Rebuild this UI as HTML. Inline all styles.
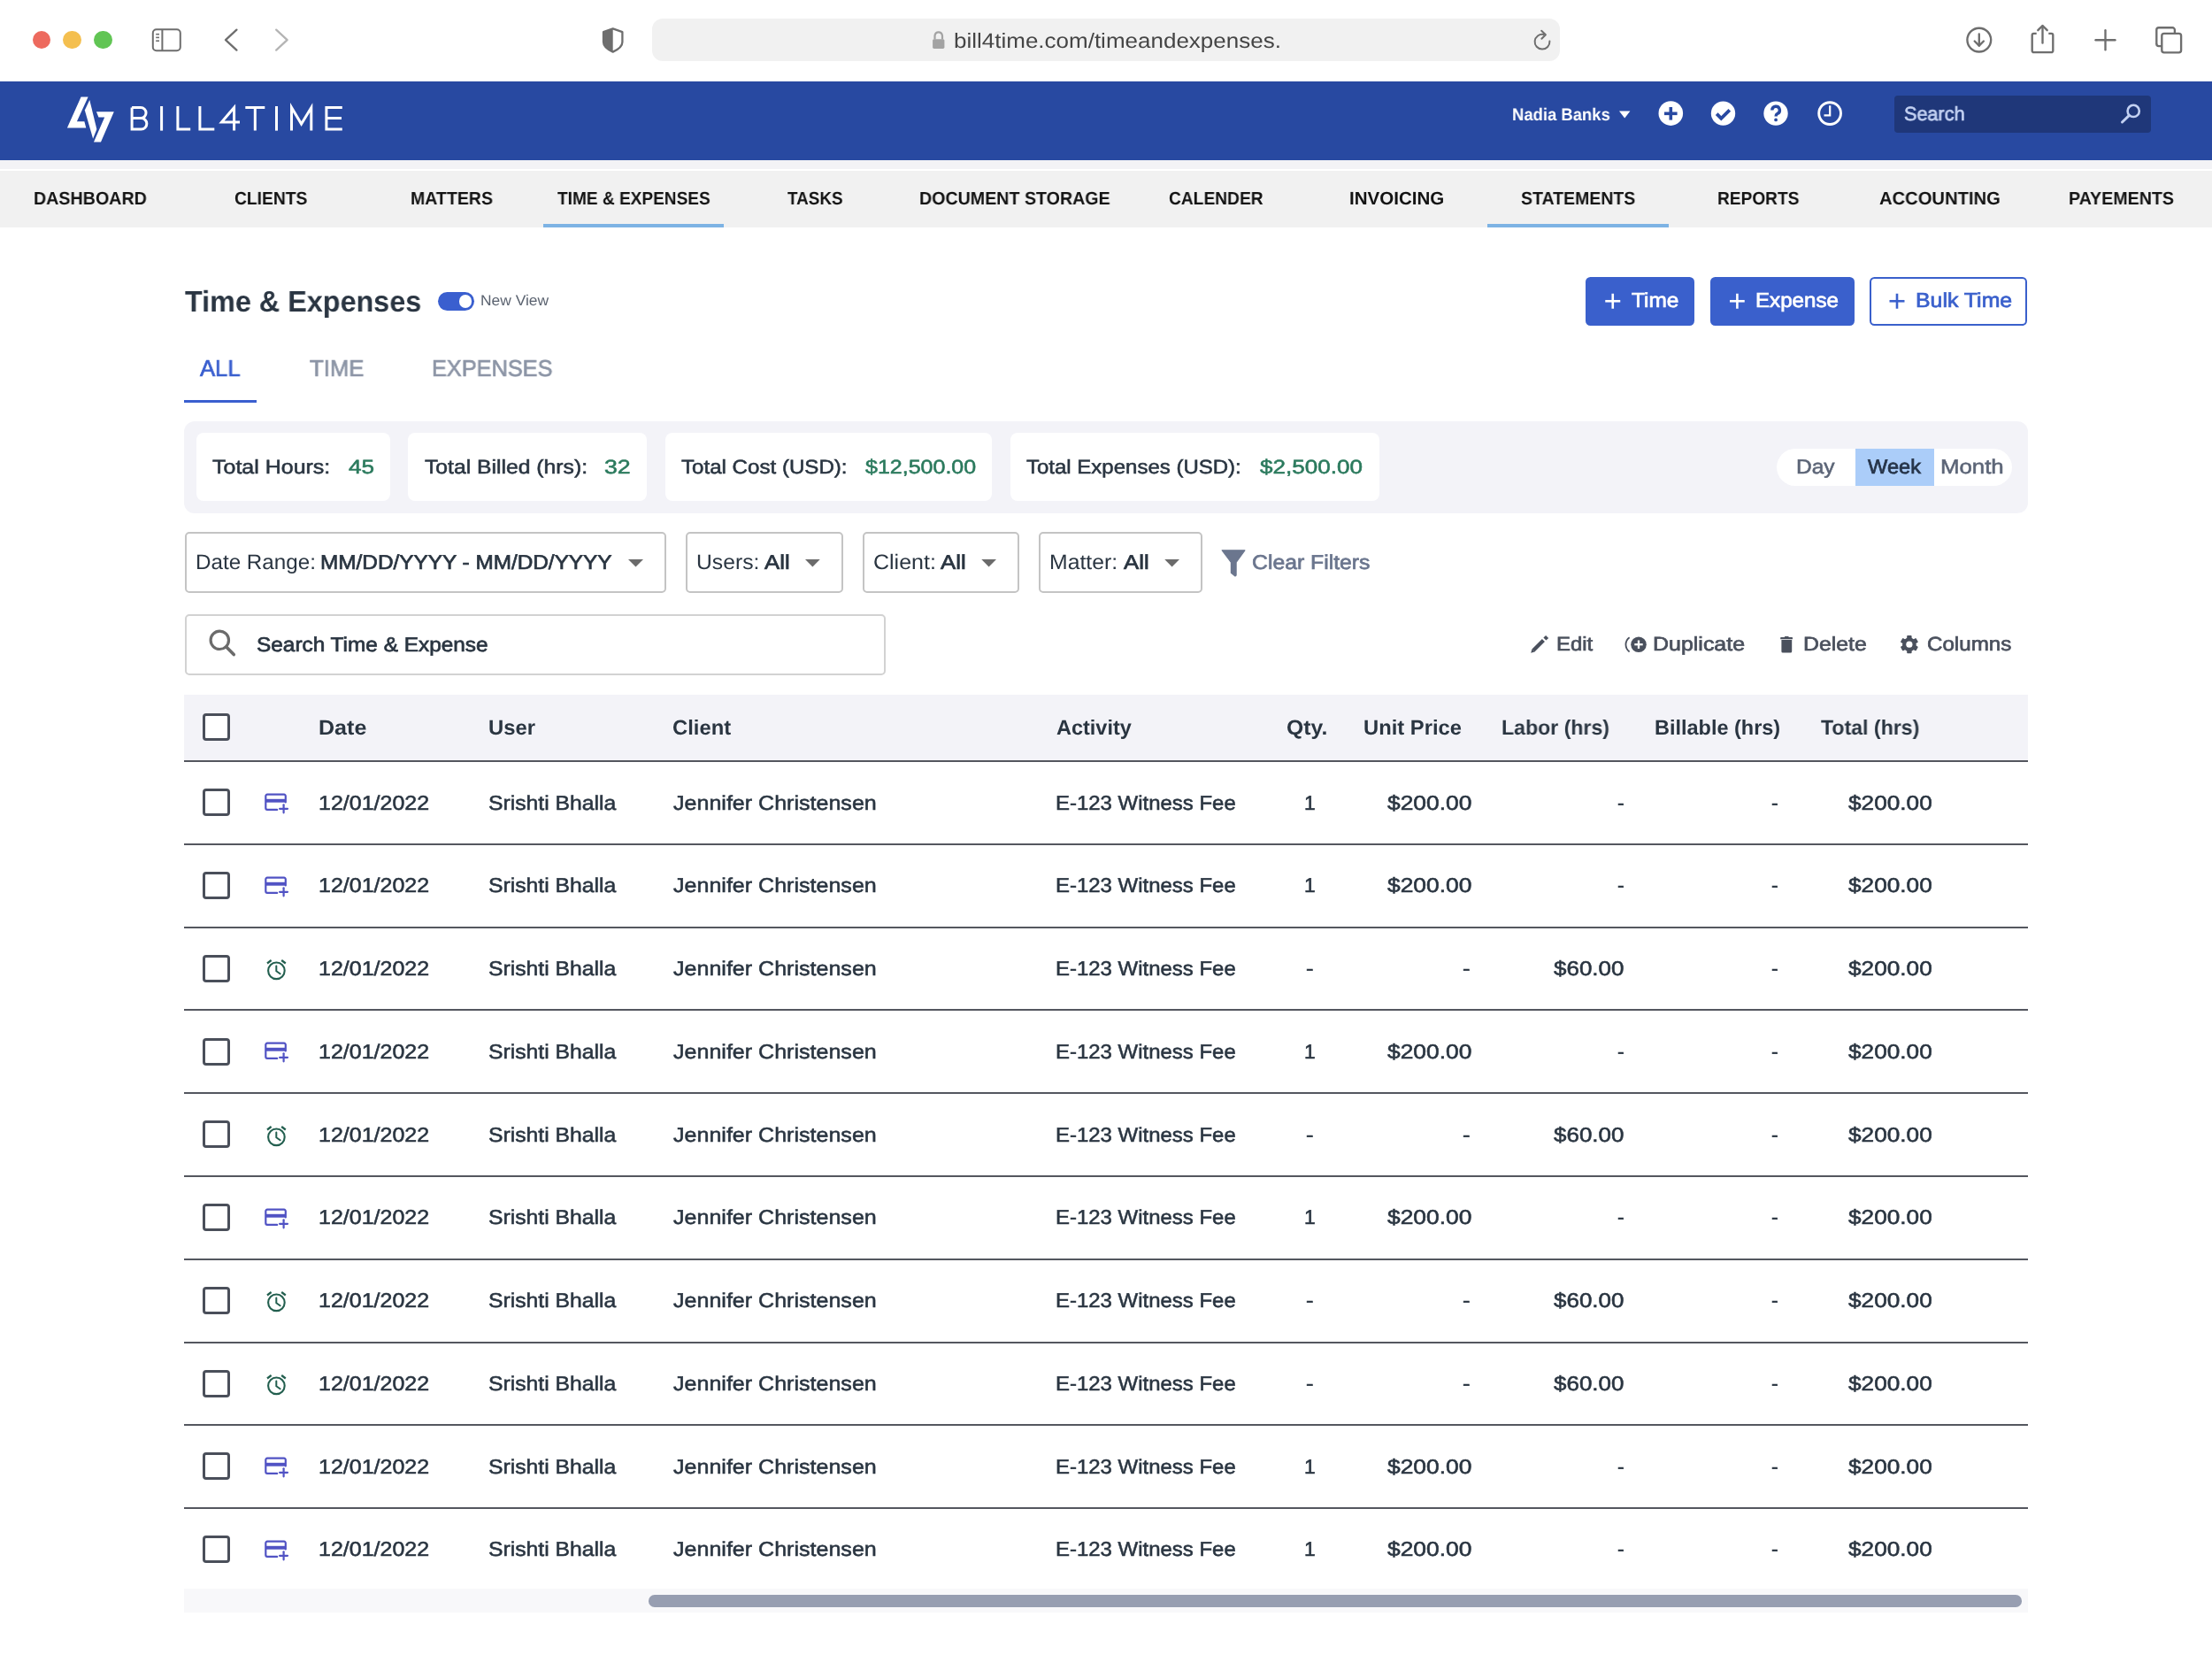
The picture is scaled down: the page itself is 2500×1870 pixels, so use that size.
<!DOCTYPE html>
<html><head><meta charset="utf-8"><title>Bill4Time - Time &amp; Expenses</title>
<style>
html,body{margin:0;padding:0;width:2500px;height:1870px;overflow:hidden;background:#fff;position:relative;font-family:"Liberation Sans",sans-serif}
.t{position:absolute;white-space:nowrap;line-height:1;transform-origin:0 0;text-rendering:geometricPrecision;will-change:transform}
svg{overflow:visible}
</style></head><body>
<div style="position:absolute;left:0;top:0;width:2500px;height:92px;background:#fff"></div>
<div style="position:absolute;left:36.7px;top:34.7px;width:20.6px;height:20.6px;border-radius:50%;background:#ed6a5e"></div>
<div style="position:absolute;left:71.3px;top:34.7px;width:20.6px;height:20.6px;border-radius:50%;background:#f4bf4f"></div>
<div style="position:absolute;left:106.10000000000001px;top:34.7px;width:20.6px;height:20.6px;border-radius:50%;background:#61c554"></div>
<svg style="position:absolute;left:0;top:0" width="400" height="92">
<rect x="172.8" y="33.2" width="31" height="24" rx="4" fill="none" stroke="#6e6e6e" stroke-width="2"/>
<line x1="183.4" y1="33.2" x2="183.4" y2="57.2" stroke="#6e6e6e" stroke-width="2"/>
<line x1="176.2" y1="38.7" x2="180" y2="38.7" stroke="#6e6e6e" stroke-width="1.6"/>
<line x1="176.2" y1="42.4" x2="180" y2="42.4" stroke="#6e6e6e" stroke-width="1.6"/>
<line x1="176.2" y1="46.2" x2="180" y2="46.2" stroke="#6e6e6e" stroke-width="1.6"/>
<polyline points="267.4,33.6 255,45.1 267.4,56.6" fill="none" stroke="#6e6e6e" stroke-width="2.3" stroke-linecap="round" stroke-linejoin="round"/>
<polyline points="312.2,33.6 324.6,45.1 312.2,56.6" fill="none" stroke="#b4b4b4" stroke-width="2.3" stroke-linecap="round" stroke-linejoin="round"/>
</svg>
<svg style="position:absolute;left:0;top:0" width="760" height="92">
<path d="M692.7,32.4 L703.4,36.2 V47.5 C703.4,52.3 699,55.8 692.7,58.6 C686.4,55.8 682,52.3 682,47.5 V36.2 Z" fill="none" stroke="#6e6e6e" stroke-width="2.3" stroke-linejoin="round"/>
<path d="M692.7,32.4 L682,36.2 V47.5 C682,52.3 686.4,55.8 692.7,58.6 Z" fill="#6e6e6e"/>
</svg>
<div style="position:absolute;left:737px;top:21px;width:1026px;height:48px;border-radius:12px;background:#f1f1f1"></div>
<svg style="position:absolute;left:0;top:0" width="2500" height="92">
<path d="M1056.5,44.5 V40.5 A4.3,4.8 0 0 1 1065,40.5 V44.5" fill="none" stroke="#a3a3a3" stroke-width="2.2"/>
<rect x="1054.1" y="44.2" width="13.3" height="10.7" rx="1.6" fill="#a3a3a3"/>
<path d="M1751.4,46.6 A8.4,8.4 0 1 1 1744.6,38.95" fill="none" stroke="#6e6e6e" stroke-width="2" stroke-linecap="round"/>
<polyline points="1742.2,34.7 1746.9,39.2 1742.4,43.8" fill="none" stroke="#6e6e6e" stroke-width="2" stroke-linecap="round" stroke-linejoin="round"/>
<circle cx="2236.8" cy="45.1" r="13.4" fill="none" stroke="#6e6e6e" stroke-width="2.35"/>
<line x1="2236.8" y1="38.5" x2="2236.8" y2="51.5" stroke="#6e6e6e" stroke-width="2.35" stroke-linecap="round"/>
<polyline points="2231.7,46.5 2236.8,51.6 2241.9,46.5" fill="none" stroke="#6e6e6e" stroke-width="2.35" stroke-linecap="round" stroke-linejoin="round"/>
<path d="M2301.7,37.9 H2298.5 A1.8,1.8 0 0 0 2296.7,39.7 V57.3 A1.8,1.8 0 0 0 2298.5,59.1 H2318.5 A1.8,1.8 0 0 0 2320.3,57.3 V39.7 A1.8,1.8 0 0 0 2318.5,37.9 H2315.3" fill="none" stroke="#6e6e6e" stroke-width="2.35"/>
<line x1="2308.5" y1="29.5" x2="2308.5" y2="48.5" stroke="#6e6e6e" stroke-width="2.35" stroke-linecap="round"/>
<polyline points="2303.3,34.2 2308.5,29 2313.7,34.2" fill="none" stroke="#6e6e6e" stroke-width="2.35" stroke-linecap="round" stroke-linejoin="round"/>
<line x1="2368.5" y1="45.2" x2="2390.5" y2="45.2" stroke="#6e6e6e" stroke-width="2.35" stroke-linecap="round"/>
<line x1="2379.5" y1="34.2" x2="2379.5" y2="56.2" stroke="#6e6e6e" stroke-width="2.35" stroke-linecap="round"/>
<path d="M2437.3,50 V33.8 A2.6,2.6 0 0 1 2439.9,31.2 H2455.3 A2.6,2.6 0 0 1 2457.9,33.8 V37.5" fill="none" stroke="#6e6e6e" stroke-width="2.35"/>
<rect x="2443.3" y="37.9" width="21.8" height="21.4" rx="2.6" fill="none" stroke="#6e6e6e" stroke-width="2.35"/>
<path d="M2437.3,49.5 A2.6,2.6 0 0 0 2439.9,52.1 H2443.3" fill="none" stroke="#6e6e6e" stroke-width="2.35"/>
</svg>
<div style="position:absolute;left:0;top:92px;width:2500px;height:88.5px;background:#2849a1"></div>
<div style="position:absolute;left:0;top:180.5px;width:2500px;height:10.8px;background:#f3f3f6"></div>
<div style="position:absolute;left:0;top:191.3px;width:2500px;height:1.7px;background:#ffffff"></div>
<div style="position:absolute;left:0;top:193px;width:2500px;height:64px;background:#f1f1f1"></div>
<svg style="position:absolute;left:0;top:0" width="420" height="180">
<polygon points="91.57,109.52 99.61,109.52 86.92,137.23 95.38,137.23 97.28,144.42 75.92,144.42" fill="#fff"/>
<polygon points="101.30,113.11 109.34,146.11 105.11,156.68 95.80,124.53" fill="#fff"/>
<polygon points="108.92,126.23 128.80,126.23 113.99,160.49 105.96,160.49 118.22,132.57 111.46,132.57" fill="#fff"/>
<g fill="none" stroke="#fff" stroke-width="3" stroke-linejoin="miter">
<path d="M149.1,121.5 V146.1 H159.6 A6.25,6.25 0 0 0 159.6,133.6 H149.1 M149.1,121.5 H159 A6.05,6.05 0 0 1 159,133.6"/>
<path d="M182.6,120 V147.6"/>
<path d="M200.9,120 V146.1 H215.2"/>
<path d="M225.9,120 V146.1 H242.3"/>
<path d="M264.6,147.6 V121.5 L250.5,138 H271"/>
<path d="M277.3,121.5 H299.3 M288.3,121.5 V147.6"/>
<path d="M312.5,120 V147.6"/>
<path d="M329.5,147.6 V121.5 L340.6,140 L351.8,121.5 V147.6"/>
<path d="M386.8,121.5 H368.9 V146.1 H386.8 M368.9,133.6 H386"/>
</g></svg>
<svg style="position:absolute;left:0;top:0" width="2500" height="180">
<polygon points="1830,125.6 1842.4,125.6 1836.2,133.6" fill="#fff"/>
<circle cx="1888.3" cy="128.1" r="13.8" fill="#fff"/>
<line x1="1881" y1="128.3" x2="1895.6" y2="128.3" stroke="#2849a1" stroke-width="3.6"/>
<line x1="1888.3" y1="121" x2="1888.3" y2="135.6" stroke="#2849a1" stroke-width="3.6"/>
<circle cx="1947.5" cy="128.1" r="13.7" fill="#fff"/>
<polyline points="1940.2,128.6 1945.3,133.8 1954.8,124.3" fill="none" stroke="#2849a1" stroke-width="3.8"/>
<circle cx="2007" cy="128.1" r="13.7" fill="#fff"/>
<path d="M2002.8,124.6 A4.3,4.3 0 1 1 2008.8,128.5 C2007.4,129.3 2007.1,130 2007.1,131.5" fill="none" stroke="#2849a1" stroke-width="3.4"/>
<circle cx="2007.1" cy="135.4" r="1.9" fill="#2849a1"/>
<circle cx="2068.1" cy="128.1" r="12.4" fill="none" stroke="#fff" stroke-width="2.9"/>
<polyline points="2068.2,119.3 2068.2,130.3 2061.5,130.3" fill="none" stroke="#fff" stroke-width="2.2"/>
</svg>
<div style="position:absolute;left:2141.2px;top:108px;width:289.4px;height:42px;border-radius:4px;background:#1f3779"></div>
<svg style="position:absolute;left:0;top:0" width="2500" height="180">
<circle cx="2411.2" cy="125.4" r="6.6" fill="none" stroke="#c3d1f2" stroke-width="2.6"/>
<line x1="2406.2" y1="130.6" x2="2398.5" y2="138" stroke="#c3d1f2" stroke-width="3" stroke-linecap="round"/>
</svg>
<div style="position:absolute;left:613.7px;top:253.4px;width:204.4px;height:3.4px;background:#7db3e4"></div>
<div style="position:absolute;left:1681.4px;top:253.4px;width:204.4px;height:3.4px;background:#7db3e4"></div>
<div style="position:absolute;left:495px;top:329.9px;width:41.1px;height:20.8px;border-radius:10.4px;background:#3a5fcf"></div>
<div style="position:absolute;left:518.7px;top:333px;width:14.5px;height:14.5px;border-radius:50%;background:#fff"></div>
<div style="position:absolute;left:208.25px;top:451.75px;width:81.75px;height:3.5px;background:#3a5fcf"></div>
<div style="position:absolute;left:1791.75px;top:312.5px;width:123.25px;height:55.5px;border-radius:5.5px;background:#3a60cc"></div>
<div style="position:absolute;left:1932.5px;top:312.5px;width:163px;height:55.5px;border-radius:5.5px;background:#3a60cc"></div>
<div style="position:absolute;left:2113px;top:312.5px;width:178.25px;height:55.5px;border-radius:5.5px;background:#fff;border:2px solid #3a60cc;box-sizing:border-box"></div>
<svg style="position:absolute;left:0;top:0" width="2500" height="400">
<g stroke-width="2.6" stroke-linecap="butt">
<line x1="1814.25" y1="340.25" x2="1831.25" y2="340.25" stroke="#fff"/><line x1="1822.75" y1="331.75" x2="1822.75" y2="348.75" stroke="#fff"/>
<line x1="1955" y1="340.25" x2="1971.75" y2="340.25" stroke="#fff"/><line x1="1963.4" y1="331.75" x2="1963.4" y2="348.75" stroke="#fff"/>
<line x1="2135.5" y1="340.25" x2="2152.5" y2="340.25" stroke="#3a60cc"/><line x1="2144" y1="331.75" x2="2144" y2="348.75" stroke="#3a60cc"/>
</g></svg>
<div style="position:absolute;left:208px;top:475.5px;width:2083.5px;height:104px;border-radius:12px;background:#f3f3f8"></div>
<div style="position:absolute;left:222px;top:489.25px;width:218.75px;height:77px;border-radius:8px;background:#fff"></div>
<div style="position:absolute;left:461.25px;top:489.25px;width:270.0px;height:77px;border-radius:8px;background:#fff"></div>
<div style="position:absolute;left:752.25px;top:489.25px;width:368.75px;height:77px;border-radius:8px;background:#fff"></div>
<div style="position:absolute;left:1142.25px;top:489.25px;width:416.5px;height:77px;border-radius:8px;background:#fff"></div>
<div style="position:absolute;left:2008.25px;top:506.75px;width:265.75px;height:42px;border-radius:21px;background:#fff"></div>
<div style="position:absolute;left:2097px;top:506.75px;width:88.75px;height:42px;background:#abcdf9"></div>
<div style="position:absolute;left:208.75px;top:601.25px;width:543.75px;height:68.25px;border-radius:5px;border:2px solid #c4c4c4;box-sizing:border-box;background:#fff"></div>
<div style="position:absolute;left:775px;top:601.25px;width:177.5px;height:68.25px;border-radius:5px;border:2px solid #c4c4c4;box-sizing:border-box;background:#fff"></div>
<div style="position:absolute;left:974.5px;top:601.25px;width:177.5px;height:68.25px;border-radius:5px;border:2px solid #c4c4c4;box-sizing:border-box;background:#fff"></div>
<div style="position:absolute;left:1174.25px;top:601.25px;width:184.5px;height:68.25px;border-radius:5px;border:2px solid #c4c4c4;box-sizing:border-box;background:#fff"></div>
<svg style="position:absolute;left:0;top:0" width="2500" height="800">
<polygon points="710,632 727,632 718.5,640.5" fill="#6b6b6b"/>
<polygon points="910,632 926.75,632 918.4,640.5" fill="#6b6b6b"/>
<polygon points="1109.25,632 1126,632 1117.6,640.5" fill="#6b6b6b"/>
<polygon points="1316.25,632 1333,632 1324.6,640.5" fill="#6b6b6b"/>
<path d="M1381.2,621.8 H1406.9 L1397.1,635.5 V650 L1396,651 L1391.4,647.3 V635.5 Z" fill="#6b768e" stroke="#6b768e" stroke-width="1.2" stroke-linejoin="round"/>
</svg>
<div style="position:absolute;left:208.75px;top:693.75px;width:791.75px;height:69.25px;border-radius:5px;border:2px solid #d2d2d2;box-sizing:border-box;background:#fff"></div>
<svg style="position:absolute;left:0;top:0" width="2500" height="800">
<circle cx="248.3" cy="723.3" r="10.2" fill="none" stroke="#6b6b6b" stroke-width="3.2"/>
<line x1="255.8" y1="730.9" x2="264.2" y2="739.6" stroke="#6b6b6b" stroke-width="3.6" stroke-linecap="round"/>
</svg>
<svg style="position:absolute;left:0;top:0" width="2500" height="800">
<line x1="1732.9" y1="735.1" x2="1744.4" y2="723.6" stroke="#4a505d" stroke-width="4.3"/>
<polygon points="1730.2,737.8 1731.4,733.6 1734.6,736.6" fill="#4a505d"/>
<line x1="1745.9" y1="722.1" x2="1748.6" y2="719.4" stroke="#4a505d" stroke-width="4.3"/>
<path d="M1841.6,720.2 A10,10 0 0 0 1841.6,736.4" fill="none" stroke="#4a505d" stroke-width="1.8"/>
<circle cx="1852" cy="728.2" r="8.8" fill="#4a505d"/>
<line x1="1847.3" y1="728.2" x2="1856.7" y2="728.2" stroke="#fff" stroke-width="2.3"/>
<line x1="1852" y1="723.5" x2="1852" y2="732.9" stroke="#fff" stroke-width="2.3"/>
<rect x="2012.2" y="720.1" width="13.8" height="2.2" rx="0.6" fill="#4a505d"/>
<rect x="2017" y="719" width="4.6" height="1.6" rx="0.5" fill="#4a505d"/>
<path d="M2013.4,723.1 H2025.2 V735.9 A1.5,1.5 0 0 1 2023.7,737.4 H2014.9 A1.5,1.5 0 0 1 2013.4,735.9 Z" fill="#4a505d"/>
</svg>
<svg style="position:absolute;left:0;top:0" width="2500" height="800"><rect x="2155.2000000000003" y="718.1" width="5.4" height="5" rx="0.8" fill="#4a505d" transform="rotate(0 2157.9 728.2)"/><rect x="2155.2000000000003" y="718.1" width="5.4" height="5" rx="0.8" fill="#4a505d" transform="rotate(60 2157.9 728.2)"/><rect x="2155.2000000000003" y="718.1" width="5.4" height="5" rx="0.8" fill="#4a505d" transform="rotate(120 2157.9 728.2)"/><rect x="2155.2000000000003" y="718.1" width="5.4" height="5" rx="0.8" fill="#4a505d" transform="rotate(180 2157.9 728.2)"/><rect x="2155.2000000000003" y="718.1" width="5.4" height="5" rx="0.8" fill="#4a505d" transform="rotate(240 2157.9 728.2)"/><rect x="2155.2000000000003" y="718.1" width="5.4" height="5" rx="0.8" fill="#4a505d" transform="rotate(300 2157.9 728.2)"/><circle cx="2157.9" cy="728.2" r="7.8" fill="#4a505d"/><circle cx="2157.9" cy="728.2" r="3.6" fill="#fff"/></svg>
<div style="position:absolute;left:208px;top:784.5px;width:2083.5px;height:74.75px;background:#f3f3f8"></div>
<div style="position:absolute;left:208px;top:859px;width:2083.5px;height:2px;background:#54575f"></div>
<div style="position:absolute;left:229.2px;top:805.6px;width:31px;height:31px;border-radius:4px;border:3.4px solid #4a4f5a;box-sizing:border-box;background:#fff"></div>
<div style="position:absolute;left:229.2px;top:891.25px;width:31px;height:31px;border-radius:4px;border:3.4px solid #4a4f5a;box-sizing:border-box;background:#fff"></div>
<div style="position:absolute;left:208px;top:953px;width:2083.5px;height:2px;background:#54575f"></div>
<svg style="position:absolute;left:296px;top:890.0px" width="34" height="32" viewBox="0 0 34 32">
<path d="M17.2,24.9 H6.1 A1.8,1.8 0 0 1 4.3,23.1 V9.5 A1.8,1.8 0 0 1 6.1,7.7 H25 A1.8,1.8 0 0 1 26.8,9.5 V16.5" fill="none" stroke="#5153c4" stroke-width="2.2" stroke-linecap="round"/>
<rect x="4.3" y="12.8" width="22.5" height="3.9" fill="#5153c4"/>
<line x1="20.1" y1="23.8" x2="29" y2="23.8" stroke="#5153c4" stroke-width="2.2" stroke-linecap="round"/>
<line x1="24.6" y1="19.3" x2="24.6" y2="28.3" stroke="#5153c4" stroke-width="2.2" stroke-linecap="round"/>
</svg>
<div style="position:absolute;left:229.2px;top:985.0px;width:31px;height:31px;border-radius:4px;border:3.4px solid #4a4f5a;box-sizing:border-box;background:#fff"></div>
<div style="position:absolute;left:208px;top:1047px;width:2083.5px;height:2px;background:#54575f"></div>
<svg style="position:absolute;left:296px;top:983.75px" width="34" height="32" viewBox="0 0 34 32">
<path d="M17.2,24.9 H6.1 A1.8,1.8 0 0 1 4.3,23.1 V9.5 A1.8,1.8 0 0 1 6.1,7.7 H25 A1.8,1.8 0 0 1 26.8,9.5 V16.5" fill="none" stroke="#5153c4" stroke-width="2.2" stroke-linecap="round"/>
<rect x="4.3" y="12.8" width="22.5" height="3.9" fill="#5153c4"/>
<line x1="20.1" y1="23.8" x2="29" y2="23.8" stroke="#5153c4" stroke-width="2.2" stroke-linecap="round"/>
<line x1="24.6" y1="19.3" x2="24.6" y2="28.3" stroke="#5153c4" stroke-width="2.2" stroke-linecap="round"/>
</svg>
<div style="position:absolute;left:229.2px;top:1078.75px;width:31px;height:31px;border-radius:4px;border:3.4px solid #4a4f5a;box-sizing:border-box;background:#fff"></div>
<div style="position:absolute;left:208px;top:1140px;width:2083.5px;height:2px;background:#54575f"></div>
<svg style="position:absolute;left:296px;top:1075.0px" width="34" height="40" viewBox="0 0 34 40">
<circle cx="16.4" cy="21.85" r="9.3" fill="none" stroke="#235f4f" stroke-width="2.1"/>
<polyline points="16.3,16.4 16.3,22.2 20.6,25.3" fill="none" stroke="#235f4f" stroke-width="2" stroke-linecap="round" stroke-linejoin="round"/>
<line x1="6" y1="13.5" x2="10.6" y2="10" stroke="#235f4f" stroke-width="2.2"/>
<line x1="22.2" y1="10" x2="26.8" y2="13.5" stroke="#235f4f" stroke-width="2.2"/>
</svg>
<div style="position:absolute;left:229.2px;top:1172.5px;width:31px;height:31px;border-radius:4px;border:3.4px solid #4a4f5a;box-sizing:border-box;background:#fff"></div>
<div style="position:absolute;left:208px;top:1234px;width:2083.5px;height:2px;background:#54575f"></div>
<svg style="position:absolute;left:296px;top:1171.25px" width="34" height="32" viewBox="0 0 34 32">
<path d="M17.2,24.9 H6.1 A1.8,1.8 0 0 1 4.3,23.1 V9.5 A1.8,1.8 0 0 1 6.1,7.7 H25 A1.8,1.8 0 0 1 26.8,9.5 V16.5" fill="none" stroke="#5153c4" stroke-width="2.2" stroke-linecap="round"/>
<rect x="4.3" y="12.8" width="22.5" height="3.9" fill="#5153c4"/>
<line x1="20.1" y1="23.8" x2="29" y2="23.8" stroke="#5153c4" stroke-width="2.2" stroke-linecap="round"/>
<line x1="24.6" y1="19.3" x2="24.6" y2="28.3" stroke="#5153c4" stroke-width="2.2" stroke-linecap="round"/>
</svg>
<div style="position:absolute;left:229.2px;top:1266.25px;width:31px;height:31px;border-radius:4px;border:3.4px solid #4a4f5a;box-sizing:border-box;background:#fff"></div>
<div style="position:absolute;left:208px;top:1328px;width:2083.5px;height:2px;background:#54575f"></div>
<svg style="position:absolute;left:296px;top:1262.5px" width="34" height="40" viewBox="0 0 34 40">
<circle cx="16.4" cy="21.85" r="9.3" fill="none" stroke="#235f4f" stroke-width="2.1"/>
<polyline points="16.3,16.4 16.3,22.2 20.6,25.3" fill="none" stroke="#235f4f" stroke-width="2" stroke-linecap="round" stroke-linejoin="round"/>
<line x1="6" y1="13.5" x2="10.6" y2="10" stroke="#235f4f" stroke-width="2.2"/>
<line x1="22.2" y1="10" x2="26.8" y2="13.5" stroke="#235f4f" stroke-width="2.2"/>
</svg>
<div style="position:absolute;left:229.2px;top:1360.0px;width:31px;height:31px;border-radius:4px;border:3.4px solid #4a4f5a;box-sizing:border-box;background:#fff"></div>
<div style="position:absolute;left:208px;top:1422px;width:2083.5px;height:2px;background:#54575f"></div>
<svg style="position:absolute;left:296px;top:1358.75px" width="34" height="32" viewBox="0 0 34 32">
<path d="M17.2,24.9 H6.1 A1.8,1.8 0 0 1 4.3,23.1 V9.5 A1.8,1.8 0 0 1 6.1,7.7 H25 A1.8,1.8 0 0 1 26.8,9.5 V16.5" fill="none" stroke="#5153c4" stroke-width="2.2" stroke-linecap="round"/>
<rect x="4.3" y="12.8" width="22.5" height="3.9" fill="#5153c4"/>
<line x1="20.1" y1="23.8" x2="29" y2="23.8" stroke="#5153c4" stroke-width="2.2" stroke-linecap="round"/>
<line x1="24.6" y1="19.3" x2="24.6" y2="28.3" stroke="#5153c4" stroke-width="2.2" stroke-linecap="round"/>
</svg>
<div style="position:absolute;left:229.2px;top:1453.75px;width:31px;height:31px;border-radius:4px;border:3.4px solid #4a4f5a;box-sizing:border-box;background:#fff"></div>
<div style="position:absolute;left:208px;top:1516px;width:2083.5px;height:2px;background:#54575f"></div>
<svg style="position:absolute;left:296px;top:1450.0px" width="34" height="40" viewBox="0 0 34 40">
<circle cx="16.4" cy="21.85" r="9.3" fill="none" stroke="#235f4f" stroke-width="2.1"/>
<polyline points="16.3,16.4 16.3,22.2 20.6,25.3" fill="none" stroke="#235f4f" stroke-width="2" stroke-linecap="round" stroke-linejoin="round"/>
<line x1="6" y1="13.5" x2="10.6" y2="10" stroke="#235f4f" stroke-width="2.2"/>
<line x1="22.2" y1="10" x2="26.8" y2="13.5" stroke="#235f4f" stroke-width="2.2"/>
</svg>
<div style="position:absolute;left:229.2px;top:1547.5px;width:31px;height:31px;border-radius:4px;border:3.4px solid #4a4f5a;box-sizing:border-box;background:#fff"></div>
<div style="position:absolute;left:208px;top:1609px;width:2083.5px;height:2px;background:#54575f"></div>
<svg style="position:absolute;left:296px;top:1543.75px" width="34" height="40" viewBox="0 0 34 40">
<circle cx="16.4" cy="21.85" r="9.3" fill="none" stroke="#235f4f" stroke-width="2.1"/>
<polyline points="16.3,16.4 16.3,22.2 20.6,25.3" fill="none" stroke="#235f4f" stroke-width="2" stroke-linecap="round" stroke-linejoin="round"/>
<line x1="6" y1="13.5" x2="10.6" y2="10" stroke="#235f4f" stroke-width="2.2"/>
<line x1="22.2" y1="10" x2="26.8" y2="13.5" stroke="#235f4f" stroke-width="2.2"/>
</svg>
<div style="position:absolute;left:229.2px;top:1641.25px;width:31px;height:31px;border-radius:4px;border:3.4px solid #4a4f5a;box-sizing:border-box;background:#fff"></div>
<div style="position:absolute;left:208px;top:1703px;width:2083.5px;height:2px;background:#54575f"></div>
<svg style="position:absolute;left:296px;top:1640.0px" width="34" height="32" viewBox="0 0 34 32">
<path d="M17.2,24.9 H6.1 A1.8,1.8 0 0 1 4.3,23.1 V9.5 A1.8,1.8 0 0 1 6.1,7.7 H25 A1.8,1.8 0 0 1 26.8,9.5 V16.5" fill="none" stroke="#5153c4" stroke-width="2.2" stroke-linecap="round"/>
<rect x="4.3" y="12.8" width="22.5" height="3.9" fill="#5153c4"/>
<line x1="20.1" y1="23.8" x2="29" y2="23.8" stroke="#5153c4" stroke-width="2.2" stroke-linecap="round"/>
<line x1="24.6" y1="19.3" x2="24.6" y2="28.3" stroke="#5153c4" stroke-width="2.2" stroke-linecap="round"/>
</svg>
<div style="position:absolute;left:229.2px;top:1735.0px;width:31px;height:31px;border-radius:4px;border:3.4px solid #4a4f5a;box-sizing:border-box;background:#fff"></div>
<svg style="position:absolute;left:296px;top:1733.75px" width="34" height="32" viewBox="0 0 34 32">
<path d="M17.2,24.9 H6.1 A1.8,1.8 0 0 1 4.3,23.1 V9.5 A1.8,1.8 0 0 1 6.1,7.7 H25 A1.8,1.8 0 0 1 26.8,9.5 V16.5" fill="none" stroke="#5153c4" stroke-width="2.2" stroke-linecap="round"/>
<rect x="4.3" y="12.8" width="22.5" height="3.9" fill="#5153c4"/>
<line x1="20.1" y1="23.8" x2="29" y2="23.8" stroke="#5153c4" stroke-width="2.2" stroke-linecap="round"/>
<line x1="24.6" y1="19.3" x2="24.6" y2="28.3" stroke="#5153c4" stroke-width="2.2" stroke-linecap="round"/>
</svg>
<div style="position:absolute;left:208px;top:1795.2px;width:2083.5px;height:27.2px;background:#f8f8fa"></div>
<div style="position:absolute;left:732.5px;top:1802.1px;width:1552.3px;height:13.6px;border-radius:6.8px;background:#979eb1"></div>
<span class="t" style="left:1077.86px;top:34.74px;font-size:23.59px;font-weight:normal;color:#454545;transform:scaleX(1.1025);">bill4time.com/timeandexpenses.</span>
<span class="t" style="left:1708.72px;top:120.87px;font-size:19.58px;font-weight:bold;color:#ffffff;transform:scaleX(0.9420);">Nadia Banks</span>
<span class="t" style="left:2152.05px;top:117.84px;font-size:21.97px;font-weight:normal;color:#c3d1f2;transform:scaleX(0.9843);-webkit-text-stroke:0.7px #c3d1f2;">Search</span>
<span class="t" style="left:37.64px;top:214.82px;font-size:20.51px;font-weight:bold;color:#131313;transform:scaleX(0.9591);">DASHBOARD</span>
<span class="t" style="left:265.35px;top:214.82px;font-size:20.51px;font-weight:bold;color:#131313;transform:scaleX(0.9392);">CLIENTS</span>
<span class="t" style="left:464.35px;top:214.82px;font-size:20.51px;font-weight:bold;color:#131313;transform:scaleX(0.9526);">MATTERS</span>
<span class="t" style="left:629.56px;top:214.82px;font-size:20.51px;font-weight:bold;color:#131313;transform:scaleX(0.9303);">TIME &amp; EXPENSES</span>
<span class="t" style="left:889.56px;top:214.82px;font-size:20.51px;font-weight:bold;color:#131313;transform:scaleX(0.9206);">TASKS</span>
<span class="t" style="left:1039.34px;top:214.82px;font-size:20.51px;font-weight:bold;color:#131313;transform:scaleX(0.9577);">DOCUMENT STORAGE</span>
<span class="t" style="left:1320.65px;top:214.82px;font-size:20.51px;font-weight:bold;color:#131313;transform:scaleX(0.9362);">CALENDER</span>
<span class="t" style="left:1525.48px;top:214.82px;font-size:20.51px;font-weight:bold;color:#131313;transform:scaleX(1.0024);">INVOICING</span>
<span class="t" style="left:1719.08px;top:214.82px;font-size:20.51px;font-weight:bold;color:#131313;transform:scaleX(0.9508);">STATEMENTS</span>
<span class="t" style="left:1941.48px;top:214.82px;font-size:20.51px;font-weight:bold;color:#131313;transform:scaleX(0.9320);">REPORTS</span>
<span class="t" style="left:2124.27px;top:214.82px;font-size:20.51px;font-weight:bold;color:#131313;transform:scaleX(0.9845);">ACCOUNTING</span>
<span class="t" style="left:2337.94px;top:214.82px;font-size:20.51px;font-weight:bold;color:#131313;transform:scaleX(0.9582);">PAYEMENTS</span>
<span class="t" style="left:209.10px;top:324.75px;font-size:33.39px;font-weight:bold;color:#2a3542;transform:scaleX(0.9688);">Time &amp; Expenses</span>
<span class="t" style="left:542.93px;top:332.47px;font-size:16.78px;font-weight:normal;color:#5b6370;transform:scaleX(1.0389);">New View</span>
<span class="t" style="left:226.25px;top:403.15px;font-size:26.04px;font-weight:normal;color:#3a5fcf;transform:scaleX(0.9872);-webkit-text-stroke:0.7px #3a5fcf;">ALL</span>
<span class="t" style="left:349.79px;top:403.15px;font-size:26.04px;font-weight:normal;color:#8c95a6;transform:scaleX(0.9879);-webkit-text-stroke:0.7px #8c95a6;">TIME</span>
<span class="t" style="left:487.52px;top:403.15px;font-size:26.04px;font-weight:normal;color:#8c95a6;transform:scaleX(0.9726);-webkit-text-stroke:0.7px #8c95a6;">EXPENSES</span>
<span class="t" style="left:1843.95px;top:328.20px;font-size:23.11px;font-weight:normal;color:#ffffff;transform:scaleX(1.0569);-webkit-text-stroke:0.7px #ffffff;">Time</span>
<span class="t" style="left:1983.90px;top:328.20px;font-size:23.11px;font-weight:normal;color:#ffffff;transform:scaleX(1.0437);-webkit-text-stroke:0.7px #ffffff;">Expense</span>
<span class="t" style="left:2164.60px;top:328.20px;font-size:23.11px;font-weight:normal;color:#3a60cc;transform:scaleX(1.0764);-webkit-text-stroke:0.7px #3a60cc;">Bulk Time</span>
<span class="t" style="left:239.70px;top:516.64px;font-size:22.13px;font-weight:normal;color:#2a3541;transform:scaleX(1.1291);-webkit-text-stroke:0.55px #2a3541;">Total Hours:</span>
<span class="t" style="left:394.19px;top:516.64px;font-size:22.13px;font-weight:normal;color:#2b7a5d;transform:scaleX(1.1831);-webkit-text-stroke:0.55px #2b7a5d;">45</span>
<span class="t" style="left:479.71px;top:516.64px;font-size:22.13px;font-weight:normal;color:#2a3541;transform:scaleX(1.1169);-webkit-text-stroke:0.55px #2a3541;">Total Billed (hrs):</span>
<span class="t" style="left:682.98px;top:516.64px;font-size:22.13px;font-weight:normal;color:#2b7a5d;transform:scaleX(1.2073);-webkit-text-stroke:0.55px #2b7a5d;">32</span>
<span class="t" style="left:769.71px;top:516.64px;font-size:22.13px;font-weight:normal;color:#2a3541;transform:scaleX(1.0896);-webkit-text-stroke:0.55px #2a3541;">Total Cost (USD):</span>
<span class="t" style="left:977.87px;top:516.64px;font-size:22.13px;font-weight:normal;color:#2b7a5d;transform:scaleX(1.1301);-webkit-text-stroke:0.55px #2b7a5d;">$12,500.00</span>
<span class="t" style="left:1160.22px;top:516.64px;font-size:22.13px;font-weight:normal;color:#2a3541;transform:scaleX(1.0845);-webkit-text-stroke:0.55px #2a3541;">Total Expenses (USD):</span>
<span class="t" style="left:1424.11px;top:516.64px;font-size:22.13px;font-weight:normal;color:#2b7a5d;transform:scaleX(1.1775);-webkit-text-stroke:0.55px #2b7a5d;">$2,500.00</span>
<span class="t" style="left:2030.27px;top:515.70px;font-size:22.91px;font-weight:normal;color:#5c6577;transform:scaleX(1.0708);-webkit-text-stroke:0.55px #5c6577;">Day</span>
<span class="t" style="left:2110.95px;top:515.73px;font-size:22.82px;font-weight:normal;color:#263449;transform:scaleX(1.0367);-webkit-text-stroke:0.7px #263449;">Week</span>
<span class="t" style="left:2193.44px;top:515.70px;font-size:22.91px;font-weight:normal;color:#5c6577;transform:scaleX(1.1266);-webkit-text-stroke:0.55px #5c6577;">Month</span>
<span class="t" style="left:221.27px;top:624.25px;font-size:23.77px;font-weight:normal;color:#2a3541;transform:scaleX(1.0185);">Date Range:</span>
<span class="t" style="left:361.60px;top:623.98px;font-size:22.82px;font-weight:normal;color:#2a3541;transform:scaleX(1.0671);-webkit-text-stroke:0.7px #2a3541;">MM/DD/YYYY - MM/DD/YYYY</span>
<span class="t" style="left:786.88px;top:624.25px;font-size:23.77px;font-weight:normal;color:#2a3541;transform:scaleX(1.0392);">Users:</span>
<span class="t" style="left:863.68px;top:623.98px;font-size:22.82px;font-weight:normal;color:#2a3541;transform:scaleX(1.1278);-webkit-text-stroke:0.7px #2a3541;">All</span>
<span class="t" style="left:987.27px;top:624.25px;font-size:23.77px;font-weight:normal;color:#2a3541;transform:scaleX(1.0524);">Client:</span>
<span class="t" style="left:1063.18px;top:623.98px;font-size:22.82px;font-weight:normal;color:#2a3541;transform:scaleX(1.1278);-webkit-text-stroke:0.7px #2a3541;">All</span>
<span class="t" style="left:1186.17px;top:624.25px;font-size:23.77px;font-weight:normal;color:#2a3541;transform:scaleX(1.0423);">Matter:</span>
<span class="t" style="left:1270.18px;top:623.98px;font-size:22.82px;font-weight:normal;color:#2a3541;transform:scaleX(1.1278);-webkit-text-stroke:0.7px #2a3541;">All</span>
<span class="t" style="left:1414.56px;top:624.48px;font-size:22.82px;font-weight:normal;color:#6b768e;transform:scaleX(1.0853);-webkit-text-stroke:0.7px #6b768e;">Clear Filters</span>
<span class="t" style="left:289.62px;top:716.98px;font-size:22.82px;font-weight:normal;color:#2a3541;transform:scaleX(1.0690);-webkit-text-stroke:0.7px #2a3541;">Search Time &amp; Expense</span>
<span class="t" style="left:1759.12px;top:717.09px;font-size:22.07px;font-weight:normal;color:#4a505d;transform:scaleX(1.0849);-webkit-text-stroke:0.7px #4a505d;">Edit</span>
<span class="t" style="left:1867.82px;top:717.09px;font-size:22.07px;font-weight:normal;color:#4a505d;transform:scaleX(1.1313);-webkit-text-stroke:0.7px #4a505d;">Duplicate</span>
<span class="t" style="left:2038.33px;top:717.09px;font-size:22.07px;font-weight:normal;color:#4a505d;transform:scaleX(1.1246);-webkit-text-stroke:0.7px #4a505d;">Delete</span>
<span class="t" style="left:2177.99px;top:717.09px;font-size:22.07px;font-weight:normal;color:#4a505d;transform:scaleX(1.0944);-webkit-text-stroke:0.7px #4a505d;">Columns</span>
<span class="t" style="left:360.29px;top:811.00px;font-size:23.47px;font-weight:bold;color:#2a3541;transform:scaleX(1.0680);">Date</span>
<span class="t" style="left:551.53px;top:811.00px;font-size:23.47px;font-weight:bold;color:#2a3541;transform:scaleX(1.0161);">User</span>
<span class="t" style="left:759.97px;top:811.00px;font-size:23.47px;font-weight:bold;color:#2a3541;transform:scaleX(1.0139);">Client</span>
<span class="t" style="left:1194.23px;top:811.00px;font-size:23.47px;font-weight:bold;color:#2a3541;transform:scaleX(0.9957);">Activity</span>
<span class="t" style="left:1454.43px;top:811.00px;font-size:23.47px;font-weight:bold;color:#2a3541;transform:scaleX(1.0551);">Qty.</span>
<span class="t" style="left:1541.03px;top:811.00px;font-size:23.47px;font-weight:bold;color:#2a3541;transform:scaleX(1.0130);">Unit Price</span>
<span class="t" style="left:1697.17px;top:811.00px;font-size:23.47px;font-weight:bold;color:#2a3541;transform:scaleX(0.9850);">Labor (hrs)</span>
<span class="t" style="left:1870.40px;top:811.00px;font-size:23.47px;font-weight:bold;color:#2a3541;transform:scaleX(0.9992);">Billable (hrs)</span>
<span class="t" style="left:2058.46px;top:811.00px;font-size:23.47px;font-weight:bold;color:#2a3541;transform:scaleX(0.9850);">Total (hrs)</span>
<span class="t" style="left:359.87px;top:895.70px;font-size:22.91px;font-weight:normal;color:#2a3541;transform:scaleX(1.0913);-webkit-text-stroke:0.55px #2a3541;">12/01/2022</span>
<span class="t" style="left:551.51px;top:895.70px;font-size:22.91px;font-weight:normal;color:#2a3541;transform:scaleX(1.0794);-webkit-text-stroke:0.55px #2a3541;">Srishti Bhalla</span>
<span class="t" style="left:760.81px;top:895.70px;font-size:22.91px;font-weight:normal;color:#2a3541;transform:scaleX(1.0937);-webkit-text-stroke:0.55px #2a3541;">Jennifer Christensen</span>
<span class="t" style="left:1193.32px;top:895.70px;font-size:22.91px;font-weight:normal;color:#2a3541;transform:scaleX(1.0460);-webkit-text-stroke:0.55px #2a3541;">E-123 Witness Fee</span>
<span class="t" style="left:1473.51px;top:895.70px;font-size:22.91px;font-weight:normal;color:#2a3541;transform:scaleX(0.9998);-webkit-text-stroke:0.55px #2a3541;">1</span>
<span class="t" style="left:1567.77px;top:895.70px;font-size:22.91px;font-weight:normal;color:#2a3541;transform:scaleX(1.1529);-webkit-text-stroke:0.55px #2a3541;">$200.00</span>
<span class="t" style="left:1827.96px;top:895.70px;font-size:22.91px;font-weight:normal;color:#2a3541;transform:scaleX(1.0093);-webkit-text-stroke:0.55px #2a3541;">-</span>
<span class="t" style="left:2001.71px;top:895.70px;font-size:22.91px;font-weight:normal;color:#2a3541;transform:scaleX(1.0093);-webkit-text-stroke:0.55px #2a3541;">-</span>
<span class="t" style="left:2089.02px;top:895.70px;font-size:22.91px;font-weight:normal;color:#2a3541;transform:scaleX(1.1438);-webkit-text-stroke:0.55px #2a3541;">$200.00</span>
<span class="t" style="left:359.87px;top:989.45px;font-size:22.91px;font-weight:normal;color:#2a3541;transform:scaleX(1.0913);-webkit-text-stroke:0.55px #2a3541;">12/01/2022</span>
<span class="t" style="left:551.51px;top:989.45px;font-size:22.91px;font-weight:normal;color:#2a3541;transform:scaleX(1.0794);-webkit-text-stroke:0.55px #2a3541;">Srishti Bhalla</span>
<span class="t" style="left:760.81px;top:989.45px;font-size:22.91px;font-weight:normal;color:#2a3541;transform:scaleX(1.0937);-webkit-text-stroke:0.55px #2a3541;">Jennifer Christensen</span>
<span class="t" style="left:1193.32px;top:989.45px;font-size:22.91px;font-weight:normal;color:#2a3541;transform:scaleX(1.0460);-webkit-text-stroke:0.55px #2a3541;">E-123 Witness Fee</span>
<span class="t" style="left:1473.51px;top:989.45px;font-size:22.91px;font-weight:normal;color:#2a3541;transform:scaleX(0.9998);-webkit-text-stroke:0.55px #2a3541;">1</span>
<span class="t" style="left:1567.77px;top:989.45px;font-size:22.91px;font-weight:normal;color:#2a3541;transform:scaleX(1.1529);-webkit-text-stroke:0.55px #2a3541;">$200.00</span>
<span class="t" style="left:1827.96px;top:989.45px;font-size:22.91px;font-weight:normal;color:#2a3541;transform:scaleX(1.0093);-webkit-text-stroke:0.55px #2a3541;">-</span>
<span class="t" style="left:2001.71px;top:989.45px;font-size:22.91px;font-weight:normal;color:#2a3541;transform:scaleX(1.0093);-webkit-text-stroke:0.55px #2a3541;">-</span>
<span class="t" style="left:2089.02px;top:989.45px;font-size:22.91px;font-weight:normal;color:#2a3541;transform:scaleX(1.1438);-webkit-text-stroke:0.55px #2a3541;">$200.00</span>
<span class="t" style="left:359.87px;top:1083.20px;font-size:22.91px;font-weight:normal;color:#2a3541;transform:scaleX(1.0913);-webkit-text-stroke:0.55px #2a3541;">12/01/2022</span>
<span class="t" style="left:551.51px;top:1083.20px;font-size:22.91px;font-weight:normal;color:#2a3541;transform:scaleX(1.0794);-webkit-text-stroke:0.55px #2a3541;">Srishti Bhalla</span>
<span class="t" style="left:760.81px;top:1083.20px;font-size:22.91px;font-weight:normal;color:#2a3541;transform:scaleX(1.0937);-webkit-text-stroke:0.55px #2a3541;">Jennifer Christensen</span>
<span class="t" style="left:1193.32px;top:1083.20px;font-size:22.91px;font-weight:normal;color:#2a3541;transform:scaleX(1.0460);-webkit-text-stroke:0.55px #2a3541;">E-123 Witness Fee</span>
<span class="t" style="left:1475.63px;top:1083.20px;font-size:22.91px;font-weight:normal;color:#2a3541;transform:scaleX(1.1143);-webkit-text-stroke:0.55px #2a3541;">-</span>
<span class="t" style="left:1653.43px;top:1083.20px;font-size:22.91px;font-weight:normal;color:#2a3541;transform:scaleX(1.1143);-webkit-text-stroke:0.55px #2a3541;">-</span>
<span class="t" style="left:1755.77px;top:1083.20px;font-size:22.91px;font-weight:normal;color:#2a3541;transform:scaleX(1.1337);-webkit-text-stroke:0.55px #2a3541;">$60.00</span>
<span class="t" style="left:2001.71px;top:1083.20px;font-size:22.91px;font-weight:normal;color:#2a3541;transform:scaleX(1.0093);-webkit-text-stroke:0.55px #2a3541;">-</span>
<span class="t" style="left:2089.02px;top:1083.20px;font-size:22.91px;font-weight:normal;color:#2a3541;transform:scaleX(1.1438);-webkit-text-stroke:0.55px #2a3541;">$200.00</span>
<span class="t" style="left:359.87px;top:1176.95px;font-size:22.91px;font-weight:normal;color:#2a3541;transform:scaleX(1.0913);-webkit-text-stroke:0.55px #2a3541;">12/01/2022</span>
<span class="t" style="left:551.51px;top:1176.95px;font-size:22.91px;font-weight:normal;color:#2a3541;transform:scaleX(1.0794);-webkit-text-stroke:0.55px #2a3541;">Srishti Bhalla</span>
<span class="t" style="left:760.81px;top:1176.95px;font-size:22.91px;font-weight:normal;color:#2a3541;transform:scaleX(1.0937);-webkit-text-stroke:0.55px #2a3541;">Jennifer Christensen</span>
<span class="t" style="left:1193.32px;top:1176.95px;font-size:22.91px;font-weight:normal;color:#2a3541;transform:scaleX(1.0460);-webkit-text-stroke:0.55px #2a3541;">E-123 Witness Fee</span>
<span class="t" style="left:1473.51px;top:1176.95px;font-size:22.91px;font-weight:normal;color:#2a3541;transform:scaleX(0.9998);-webkit-text-stroke:0.55px #2a3541;">1</span>
<span class="t" style="left:1567.77px;top:1176.95px;font-size:22.91px;font-weight:normal;color:#2a3541;transform:scaleX(1.1529);-webkit-text-stroke:0.55px #2a3541;">$200.00</span>
<span class="t" style="left:1827.96px;top:1176.95px;font-size:22.91px;font-weight:normal;color:#2a3541;transform:scaleX(1.0093);-webkit-text-stroke:0.55px #2a3541;">-</span>
<span class="t" style="left:2001.71px;top:1176.95px;font-size:22.91px;font-weight:normal;color:#2a3541;transform:scaleX(1.0093);-webkit-text-stroke:0.55px #2a3541;">-</span>
<span class="t" style="left:2089.02px;top:1176.95px;font-size:22.91px;font-weight:normal;color:#2a3541;transform:scaleX(1.1438);-webkit-text-stroke:0.55px #2a3541;">$200.00</span>
<span class="t" style="left:359.87px;top:1270.70px;font-size:22.91px;font-weight:normal;color:#2a3541;transform:scaleX(1.0913);-webkit-text-stroke:0.55px #2a3541;">12/01/2022</span>
<span class="t" style="left:551.51px;top:1270.70px;font-size:22.91px;font-weight:normal;color:#2a3541;transform:scaleX(1.0794);-webkit-text-stroke:0.55px #2a3541;">Srishti Bhalla</span>
<span class="t" style="left:760.81px;top:1270.70px;font-size:22.91px;font-weight:normal;color:#2a3541;transform:scaleX(1.0937);-webkit-text-stroke:0.55px #2a3541;">Jennifer Christensen</span>
<span class="t" style="left:1193.32px;top:1270.70px;font-size:22.91px;font-weight:normal;color:#2a3541;transform:scaleX(1.0460);-webkit-text-stroke:0.55px #2a3541;">E-123 Witness Fee</span>
<span class="t" style="left:1475.63px;top:1270.70px;font-size:22.91px;font-weight:normal;color:#2a3541;transform:scaleX(1.1143);-webkit-text-stroke:0.55px #2a3541;">-</span>
<span class="t" style="left:1653.43px;top:1270.70px;font-size:22.91px;font-weight:normal;color:#2a3541;transform:scaleX(1.1143);-webkit-text-stroke:0.55px #2a3541;">-</span>
<span class="t" style="left:1755.77px;top:1270.70px;font-size:22.91px;font-weight:normal;color:#2a3541;transform:scaleX(1.1337);-webkit-text-stroke:0.55px #2a3541;">$60.00</span>
<span class="t" style="left:2001.71px;top:1270.70px;font-size:22.91px;font-weight:normal;color:#2a3541;transform:scaleX(1.0093);-webkit-text-stroke:0.55px #2a3541;">-</span>
<span class="t" style="left:2089.02px;top:1270.70px;font-size:22.91px;font-weight:normal;color:#2a3541;transform:scaleX(1.1438);-webkit-text-stroke:0.55px #2a3541;">$200.00</span>
<span class="t" style="left:359.87px;top:1364.45px;font-size:22.91px;font-weight:normal;color:#2a3541;transform:scaleX(1.0913);-webkit-text-stroke:0.55px #2a3541;">12/01/2022</span>
<span class="t" style="left:551.51px;top:1364.45px;font-size:22.91px;font-weight:normal;color:#2a3541;transform:scaleX(1.0794);-webkit-text-stroke:0.55px #2a3541;">Srishti Bhalla</span>
<span class="t" style="left:760.81px;top:1364.45px;font-size:22.91px;font-weight:normal;color:#2a3541;transform:scaleX(1.0937);-webkit-text-stroke:0.55px #2a3541;">Jennifer Christensen</span>
<span class="t" style="left:1193.32px;top:1364.45px;font-size:22.91px;font-weight:normal;color:#2a3541;transform:scaleX(1.0460);-webkit-text-stroke:0.55px #2a3541;">E-123 Witness Fee</span>
<span class="t" style="left:1473.51px;top:1364.45px;font-size:22.91px;font-weight:normal;color:#2a3541;transform:scaleX(0.9998);-webkit-text-stroke:0.55px #2a3541;">1</span>
<span class="t" style="left:1567.77px;top:1364.45px;font-size:22.91px;font-weight:normal;color:#2a3541;transform:scaleX(1.1529);-webkit-text-stroke:0.55px #2a3541;">$200.00</span>
<span class="t" style="left:1827.96px;top:1364.45px;font-size:22.91px;font-weight:normal;color:#2a3541;transform:scaleX(1.0093);-webkit-text-stroke:0.55px #2a3541;">-</span>
<span class="t" style="left:2001.71px;top:1364.45px;font-size:22.91px;font-weight:normal;color:#2a3541;transform:scaleX(1.0093);-webkit-text-stroke:0.55px #2a3541;">-</span>
<span class="t" style="left:2089.02px;top:1364.45px;font-size:22.91px;font-weight:normal;color:#2a3541;transform:scaleX(1.1438);-webkit-text-stroke:0.55px #2a3541;">$200.00</span>
<span class="t" style="left:359.87px;top:1458.20px;font-size:22.91px;font-weight:normal;color:#2a3541;transform:scaleX(1.0913);-webkit-text-stroke:0.55px #2a3541;">12/01/2022</span>
<span class="t" style="left:551.51px;top:1458.20px;font-size:22.91px;font-weight:normal;color:#2a3541;transform:scaleX(1.0794);-webkit-text-stroke:0.55px #2a3541;">Srishti Bhalla</span>
<span class="t" style="left:760.81px;top:1458.20px;font-size:22.91px;font-weight:normal;color:#2a3541;transform:scaleX(1.0937);-webkit-text-stroke:0.55px #2a3541;">Jennifer Christensen</span>
<span class="t" style="left:1193.32px;top:1458.20px;font-size:22.91px;font-weight:normal;color:#2a3541;transform:scaleX(1.0460);-webkit-text-stroke:0.55px #2a3541;">E-123 Witness Fee</span>
<span class="t" style="left:1475.63px;top:1458.20px;font-size:22.91px;font-weight:normal;color:#2a3541;transform:scaleX(1.1143);-webkit-text-stroke:0.55px #2a3541;">-</span>
<span class="t" style="left:1653.43px;top:1458.20px;font-size:22.91px;font-weight:normal;color:#2a3541;transform:scaleX(1.1143);-webkit-text-stroke:0.55px #2a3541;">-</span>
<span class="t" style="left:1755.77px;top:1458.20px;font-size:22.91px;font-weight:normal;color:#2a3541;transform:scaleX(1.1337);-webkit-text-stroke:0.55px #2a3541;">$60.00</span>
<span class="t" style="left:2001.71px;top:1458.20px;font-size:22.91px;font-weight:normal;color:#2a3541;transform:scaleX(1.0093);-webkit-text-stroke:0.55px #2a3541;">-</span>
<span class="t" style="left:2089.02px;top:1458.20px;font-size:22.91px;font-weight:normal;color:#2a3541;transform:scaleX(1.1438);-webkit-text-stroke:0.55px #2a3541;">$200.00</span>
<span class="t" style="left:359.87px;top:1551.95px;font-size:22.91px;font-weight:normal;color:#2a3541;transform:scaleX(1.0913);-webkit-text-stroke:0.55px #2a3541;">12/01/2022</span>
<span class="t" style="left:551.51px;top:1551.95px;font-size:22.91px;font-weight:normal;color:#2a3541;transform:scaleX(1.0794);-webkit-text-stroke:0.55px #2a3541;">Srishti Bhalla</span>
<span class="t" style="left:760.81px;top:1551.95px;font-size:22.91px;font-weight:normal;color:#2a3541;transform:scaleX(1.0937);-webkit-text-stroke:0.55px #2a3541;">Jennifer Christensen</span>
<span class="t" style="left:1193.32px;top:1551.95px;font-size:22.91px;font-weight:normal;color:#2a3541;transform:scaleX(1.0460);-webkit-text-stroke:0.55px #2a3541;">E-123 Witness Fee</span>
<span class="t" style="left:1475.63px;top:1551.95px;font-size:22.91px;font-weight:normal;color:#2a3541;transform:scaleX(1.1143);-webkit-text-stroke:0.55px #2a3541;">-</span>
<span class="t" style="left:1653.43px;top:1551.95px;font-size:22.91px;font-weight:normal;color:#2a3541;transform:scaleX(1.1143);-webkit-text-stroke:0.55px #2a3541;">-</span>
<span class="t" style="left:1755.77px;top:1551.95px;font-size:22.91px;font-weight:normal;color:#2a3541;transform:scaleX(1.1337);-webkit-text-stroke:0.55px #2a3541;">$60.00</span>
<span class="t" style="left:2001.71px;top:1551.95px;font-size:22.91px;font-weight:normal;color:#2a3541;transform:scaleX(1.0093);-webkit-text-stroke:0.55px #2a3541;">-</span>
<span class="t" style="left:2089.02px;top:1551.95px;font-size:22.91px;font-weight:normal;color:#2a3541;transform:scaleX(1.1438);-webkit-text-stroke:0.55px #2a3541;">$200.00</span>
<span class="t" style="left:359.87px;top:1645.70px;font-size:22.91px;font-weight:normal;color:#2a3541;transform:scaleX(1.0913);-webkit-text-stroke:0.55px #2a3541;">12/01/2022</span>
<span class="t" style="left:551.51px;top:1645.70px;font-size:22.91px;font-weight:normal;color:#2a3541;transform:scaleX(1.0794);-webkit-text-stroke:0.55px #2a3541;">Srishti Bhalla</span>
<span class="t" style="left:760.81px;top:1645.70px;font-size:22.91px;font-weight:normal;color:#2a3541;transform:scaleX(1.0937);-webkit-text-stroke:0.55px #2a3541;">Jennifer Christensen</span>
<span class="t" style="left:1193.32px;top:1645.70px;font-size:22.91px;font-weight:normal;color:#2a3541;transform:scaleX(1.0460);-webkit-text-stroke:0.55px #2a3541;">E-123 Witness Fee</span>
<span class="t" style="left:1473.51px;top:1645.70px;font-size:22.91px;font-weight:normal;color:#2a3541;transform:scaleX(0.9998);-webkit-text-stroke:0.55px #2a3541;">1</span>
<span class="t" style="left:1567.77px;top:1645.70px;font-size:22.91px;font-weight:normal;color:#2a3541;transform:scaleX(1.1529);-webkit-text-stroke:0.55px #2a3541;">$200.00</span>
<span class="t" style="left:1827.96px;top:1645.70px;font-size:22.91px;font-weight:normal;color:#2a3541;transform:scaleX(1.0093);-webkit-text-stroke:0.55px #2a3541;">-</span>
<span class="t" style="left:2001.71px;top:1645.70px;font-size:22.91px;font-weight:normal;color:#2a3541;transform:scaleX(1.0093);-webkit-text-stroke:0.55px #2a3541;">-</span>
<span class="t" style="left:2089.02px;top:1645.70px;font-size:22.91px;font-weight:normal;color:#2a3541;transform:scaleX(1.1438);-webkit-text-stroke:0.55px #2a3541;">$200.00</span>
<span class="t" style="left:359.87px;top:1739.45px;font-size:22.91px;font-weight:normal;color:#2a3541;transform:scaleX(1.0913);-webkit-text-stroke:0.55px #2a3541;">12/01/2022</span>
<span class="t" style="left:551.51px;top:1739.45px;font-size:22.91px;font-weight:normal;color:#2a3541;transform:scaleX(1.0794);-webkit-text-stroke:0.55px #2a3541;">Srishti Bhalla</span>
<span class="t" style="left:760.81px;top:1739.45px;font-size:22.91px;font-weight:normal;color:#2a3541;transform:scaleX(1.0937);-webkit-text-stroke:0.55px #2a3541;">Jennifer Christensen</span>
<span class="t" style="left:1193.32px;top:1739.45px;font-size:22.91px;font-weight:normal;color:#2a3541;transform:scaleX(1.0460);-webkit-text-stroke:0.55px #2a3541;">E-123 Witness Fee</span>
<span class="t" style="left:1473.51px;top:1739.45px;font-size:22.91px;font-weight:normal;color:#2a3541;transform:scaleX(0.9998);-webkit-text-stroke:0.55px #2a3541;">1</span>
<span class="t" style="left:1567.77px;top:1739.45px;font-size:22.91px;font-weight:normal;color:#2a3541;transform:scaleX(1.1529);-webkit-text-stroke:0.55px #2a3541;">$200.00</span>
<span class="t" style="left:1827.96px;top:1739.45px;font-size:22.91px;font-weight:normal;color:#2a3541;transform:scaleX(1.0093);-webkit-text-stroke:0.55px #2a3541;">-</span>
<span class="t" style="left:2001.71px;top:1739.45px;font-size:22.91px;font-weight:normal;color:#2a3541;transform:scaleX(1.0093);-webkit-text-stroke:0.55px #2a3541;">-</span>
<span class="t" style="left:2089.02px;top:1739.45px;font-size:22.91px;font-weight:normal;color:#2a3541;transform:scaleX(1.1438);-webkit-text-stroke:0.55px #2a3541;">$200.00</span>
</body></html>
